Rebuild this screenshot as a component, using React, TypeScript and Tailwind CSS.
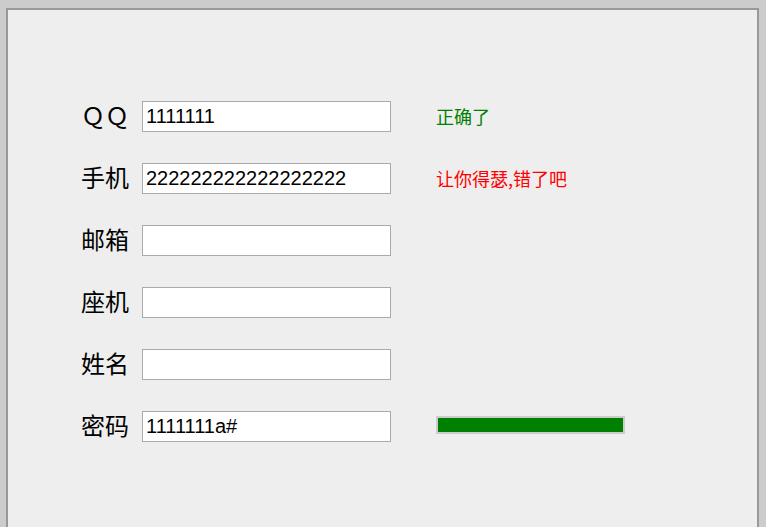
const rows = [
  { label: 'ＱＱ', value: '1111111', msg: { text: '正确了', color: 'text-[#008000]' } },
  { label: '手机', value: '222222222222222222', msg: { text: '让你得瑟,错了吧', color: 'text-[#ff0000]' } },
  { label: '邮箱', value: '' },
  { label: '座机', value: '' },
  { label: '姓名', value: '' },
  { label: '密码', value: '1111111a#', strength: true },
];

export default function App() {
  return (
    <div className="h-[527px] overflow-hidden bg-[#cccccc] pt-2 pl-[6px] pr-[7px] font-['Liberation_Sans','Noto_Sans_CJK_SC',sans-serif]">
      <div className="h-[600px] border-2 border-[#999999] bg-[#eeeeee] pl-[73px] pt-[91px]">
        <div className="flex flex-col gap-[31px]">
          {rows.map((r) => (
            <div key={r.label} className="flex h-[31px] items-center">
              <label className="mb-[4px] w-[48px] text-[24px] leading-none text-black font-['Noto_Sans_CJK_SC',sans-serif]">
                {r.label}
              </label>
              <input
                readOnly
                value={r.value}
                className="ml-[13px] h-[31px] w-[249px] border border-[#aaaaaa] bg-white px-[3px] text-[20px] text-black outline-none font-['Liberation_Sans',sans-serif]"
              />
              <div className="ml-[45px] flex items-center">
                {r.msg && (
                  <span className={`mb-[2px] text-[18px] leading-none font-['Noto_Sans_CJK_SC',sans-serif] ${r.msg.color}`}>
                    {r.msg.text}
                  </span>
                )}
                {r.strength && (
                  <div className="mb-[3px] h-[18px] w-[189px] border-2 border-[#cccccc]">
                    <div className="h-full w-full bg-[#008000]" />
                  </div>
                )}
              </div>
            </div>
          ))}
        </div>
      </div>
    </div>
  );
}
